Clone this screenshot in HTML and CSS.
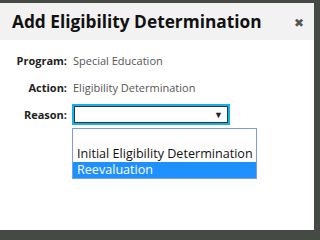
FILE: index.html
```html
<!DOCTYPE html>
<html>
<head>
<meta charset="utf-8">
<link rel="stylesheet" href="styles.css">
</head>
<body>
<div class="modal">
  <div class="header">
    <h1 class="title">Add Eligibility Determination</h1>
    <span class="close">&#x2716;</span>
  </div>
  <div class="content">
    <div class="row"><span class="label">Program:</span><span class="value">Special Education</span></div>
    <div class="row action"><span class="label">Action:</span><span class="value">Eligibility Determination</span></div>
    <div class="row reason"><span class="label">Reason:</span>
      <div class="field">
        <div class="select"><span class="arrow">&#x25BC;</span></div>
        <div class="list">
          <div class="opt blank"></div>
          <div class="opt">Initial Eligibility Determination</div>
          <div class="opt sel">Reevaluation</div>
        </div>
      </div>
    </div>
  </div>
</div>
</body>
</html>
```
FILE: styles.css
```css
html, body {
  margin: 0;
  padding: 0;
}
body {
  width: 317px;
  height: 234px;
  background: #464a45;
  overflow: hidden;
  font-family: "Open Sans", "Liberation Sans", sans-serif;
}
.modal {
  margin-top: 3px;
  width: 314px;
  height: 227px;
  background: #fff;
}
.header {
  height: 37px;
  background: #f2f2f2;
  display: flex;
  align-items: center;
  justify-content: space-between;
  padding: 0 10px 0 12px;
  box-sizing: border-box;
}
.title {
  margin: 0;
  font-size: 17.3px;
  font-weight: 700;
  color: #111;
}
.close {
  font-size: 12px;
  color: #555;
  margin-top: 2px;
}
.content {
  padding-top: 12px;
}
.row {
  display: flex;
  align-items: flex-start;
  font-size: 11px;
  line-height: 18px;
  margin-bottom: 9px;
}
.row.action {
  margin-bottom: 7px;
}
.label {
  width: 67px;
  text-align: right;
  font-weight: 700;
  color: #222;
}
.value {
  margin-left: 6px;
  color: #555;
}
.reason .label {
  line-height: 21px;
}
.field {
  margin-left: 5px;
  display: flex;
  flex-direction: column;
}
.select {
  width: 158px;
  height: 21px;
  box-sizing: border-box;
  border: 2px solid #12b2e6;
  box-shadow: inset 0 0 0 1px #333;
  display: flex;
  align-items: center;
  justify-content: flex-end;
  padding-right: 5px;
}
.arrow {
  font-size: 9px;
  color: #222;
  line-height: 1;
}
.list {
  margin-top: 3px;
  width: 185px;
  box-sizing: border-box;
  border: 1px solid #7f9ddb;
  background: #fff;
  font-size: 12.6px;
  color: #111;
}
.opt {
  height: 16px;
  line-height: 16px;
  padding-left: 4px;
  white-space: nowrap;
}
.opt.blank {
  height: 17px;
}
.opt.sel {
  background: #1e90ff;
  color: #fff;
}
```
